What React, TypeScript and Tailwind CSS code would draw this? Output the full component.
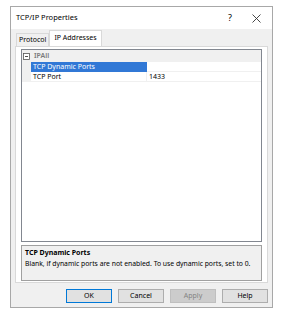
import React from "react";

export default function App() {
  const font = { fontFamily: '"Noto Sans", "Open Sans", Arial, sans-serif' };
  return (
    <div className="w-[283px] h-[316px] bg-white pt-[6px] pl-[10px]" style={font}>
      <div className="w-[263px] h-[302px] border border-[#a8a8a8] bg-[#f0f0f0] flex flex-col">
        {/* title bar */}
        <div className="h-[22px] bg-white flex items-center pl-[5px] text-[7.5px] text-black">
          <span className="flex-1">TCP/IP Properties</span>
          <span className="w-[20px] text-center text-[9px]">?</span>
          <span className="w-[32px] flex justify-center">
            <svg width="9" height="9" viewBox="0 0 9 9">
              <path d="M0.5 0.5 L8.5 8.5 M8.5 0.5 L0.5 8.5" stroke="#333" strokeWidth="0.9" />
            </svg>
          </span>
        </div>
        {/* tabs */}
        <div className="flex items-end h-[16px] pl-[5px] mt-[1px]">
          <div className="h-[13px] px-[2px] border border-b-0 border-[#d9d9d9] bg-[#f0f0f0] text-[7px] leading-[12px] text-black">Protocol</div>
          <div className="h-[16px] px-[4px] border border-b-0 border-[#d9d9d9] bg-white text-[7px] leading-[14px] text-black">IP Addresses</div>
        </div>
        {/* panel */}
        <div className="mx-[4px] h-[237px] border border-[#d9d9d9] bg-white px-[5px] pt-[2px] flex flex-col">
          <div className="h-[193px] border border-[#828790] bg-white flex flex-col">
            <div className="h-[12px] bg-[#f0f0f0] flex items-center">
              <div className="w-[9px] flex justify-center">
                <svg width="7" height="7" viewBox="0 0 7 7">
                  <rect x="0.5" y="0.5" width="6" height="6" fill="white" stroke="#555" strokeWidth="0.8" />
                  <path d="M2 3.5 H5" stroke="#222" strokeWidth="0.8" />
                </svg>
              </div>
              <span className="pl-[3px] text-[7px] text-[#7a7a7a] font-semibold">IPAll</span>
            </div>
            <div className="h-[10px] flex">
              <div className="w-[9px] bg-[#f0f0f0]" />
              <div className="w-[116px] bg-[#3178d6] text-white text-[7px] leading-[10px] pl-[2px]">TCP Dynamic Ports</div>
              <div className="flex-1 border-b border-[#f0f0f0]" />
            </div>
            <div className="h-[10px] flex">
              <div className="w-[9px] bg-[#f0f0f0]" />
              <div className="w-[116px] text-black text-[7px] leading-[10px] pl-[2px] border-b border-r border-[#f0f0f0]">TCP Port</div>
              <div className="flex-1 text-black text-[7px] leading-[10px] pl-[2px] border-b border-[#f0f0f0]">1433</div>
            </div>
          </div>
          <div className="mt-[3px] h-[36px] border border-[#a0a0a0] bg-[#f0f0f0] px-[3px] pt-[2px]">
            <div className="text-[7px] font-bold text-black leading-[10px]">TCP Dynamic Ports</div>
            <div className="text-[6.8px] text-black leading-[10px] mt-[1px]">Blank, if dynamic ports are not enabled. To use dynamic ports, set to 0.</div>
          </div>
        </div>
        {/* buttons */}
        <div className="flex justify-end gap-[6px] pr-[4px] mt-[6px]">
          <div className="w-[46px] h-[14px] border border-[#0078d7] bg-[#e1e1e1] text-[7px] flex items-center justify-center text-black">OK</div>
          <div className="w-[46px] h-[14px] border border-[#adadad] bg-[#e1e1e1] text-[7px] flex items-center justify-center text-black">Cancel</div>
          <div className="w-[46px] h-[14px] border border-[#bfbfbf] bg-[#cccccc] text-[7px] flex items-center justify-center text-[#838383]">Apply</div>
          <div className="w-[46px] h-[14px] border border-[#adadad] bg-[#e1e1e1] text-[7px] flex items-center justify-center text-black">Help</div>
        </div>
      </div>
    </div>
  );
}
